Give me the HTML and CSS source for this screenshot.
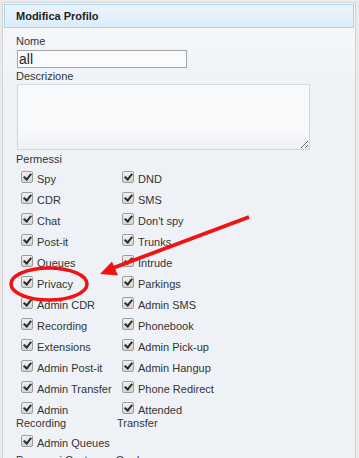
FILE: index.html
```html
<!doctype html>
<html lang="en">
<head>
  <meta charset="utf-8" />
  <meta name="viewport" content="width=device-width,initial-scale=1" />
  <title>Modifica Profilo</title>
  <link rel="stylesheet" href="styles.css">
</head>
<body>
  <div class="panel">
    <div class="panel-head">Modifica Profilo</div>
    <form class="profile">
      <label class="field" for="nome">Nome</label>
      <input type="text" id="nome" class="txt" value="all">

      <label class="field" for="descr">Descrizione</label>
      <textarea id="descr" class="area"></textarea>

      <div class="field group">Permessi</div>
      <div class="perms">
        <label class="perm"><span class="cb"></span>Spy</label>
        <label class="perm"><span class="cb"></span>DND</label>
        <label class="perm"><span class="cb"></span>CDR</label>
        <label class="perm"><span class="cb"></span>SMS</label>
        <label class="perm"><span class="cb"></span>Chat</label>
        <label class="perm"><span class="cb"></span>Don't spy</label>
        <label class="perm"><span class="cb"></span>Post-it</label>
        <label class="perm"><span class="cb"></span>Trunks</label>
        <label class="perm"><span class="cb"></span>Queues</label>
        <label class="perm"><span class="cb"></span>Intrude</label>
        <label class="perm"><span class="cb"></span>Privacy</label>
        <label class="perm"><span class="cb"></span>Parkings</label>
        <label class="perm"><span class="cb"></span>Admin CDR</label>
        <label class="perm"><span class="cb"></span>Admin SMS</label>
        <label class="perm"><span class="cb"></span>Recording</label>
        <label class="perm"><span class="cb"></span>Phonebook</label>
        <label class="perm"><span class="cb"></span>Extensions</label>
        <label class="perm"><span class="cb"></span>Admin Pick-up</label>
        <label class="perm"><span class="cb"></span>Admin Post-it</label>
        <label class="perm"><span class="cb"></span>Admin Hangup</label>
        <label class="perm"><span class="cb"></span>Admin Transfer</label>
        <label class="perm"><span class="cb"></span>Phone Redirect</label>
        <label class="perm"><span class="cb"></span>Admin Recording</label>
        <label class="perm"><span class="cb"></span>Attended Transfer</label>
        <label class="perm"><span class="cb"></span>Admin Queues</label>
      </div>

      <div class="field group">Permessi Customer Card</div>
      <div class="perms">
        <label class="perm"><span class="cb"></span>Identity</label>
        <label class="perm"><span class="cb"></span>Calls</label>
      </div>
    </form>
  </div>

  <!-- red annotation drawn over the screenshot -->
  <svg class="marks" width="359" height="458" viewBox="0 0 359 458">
    <ellipse cx="49" cy="284" rx="38" ry="16" fill="none" stroke="#f21212" stroke-width="3.5" />
    <line x1="249" y1="217" x2="113" y2="268" stroke="#f21212" stroke-width="4" />
    <polygon points="100,274 112,261.5 118,275.5" fill="#f21212" />
  </svg>
</body>
</html>
```

FILE: styles.css
```css
html, body { margin:0; padding:0; height:100%; overflow:hidden; }
body {
  position:relative;
  background:#ebebeb;
  font-family:"Liberation Sans", Arial, sans-serif;
  font-size:11px;
  color:#333;
}
.panel {
  margin:2px 3px 0 2px;
  border:1px solid #d2d2d2;
  padding:1px 0 0;
  min-height:600px;
  background:linear-gradient(#f8f9fb, #eef2f6 90px, #eff3f7);
}
.panel-head {
  margin:0 1px;
  height:22px; line-height:22px;
  border:1px solid #a9d2ef;
  padding:0 11px;
  background:linear-gradient(#eaf4fd, #dcecf9);
  font-weight:bold; color:#222;
}
.profile { padding:7px 13px 0; }
.field { display:block; line-height:13px; }
.group { margin-top:3px; }
.txt {
  display:block; box-sizing:border-box;
  width:170px; height:18px;
  margin:2px 0 2px 1px; padding:0 1px;
  border:1px solid #a6a6a6; border-radius:0;
  background:#fafbfc;
  font-family:"Liberation Sans", Arial, sans-serif;
  font-size:14px; color:#222;
  outline:none;
}
.area {
  display:block; box-sizing:border-box;
  width:293px; height:66px;
  margin:1px 0 0 1px; padding:2px;
  border:1px solid #d6d6d6;
  background:linear-gradient(#f8f9fa 70%, #eef1f4);
  font-family:"Liberation Sans", Arial, sans-serif;
  font-size:11px;
}
.perms {
  display:grid;
  grid-template-columns:101px 101px;
}
.perm {
  display:block; box-sizing:border-box;
  min-height:21px;
  padding:5px 0 0;
  line-height:13px;
  color:#333;
}
.cb {
  display:inline-block; position:relative;
  box-sizing:border-box;
  width:12px; height:12px;
  margin:0 4px 0 5px;
  border:1px solid #9c9c9c; border-radius:2px;
  background:linear-gradient(#f2f2f2, #d4d4d4);
}
.cb::after {
  content:""; position:absolute;
  left:3px; top:0;
  width:3px; height:6px;
  border:solid #2b2b2b; border-width:0 2px 2px 0;
  transform:rotate(40deg);
}
.marks { position:absolute; top:0; left:0; pointer-events:none; }
```
